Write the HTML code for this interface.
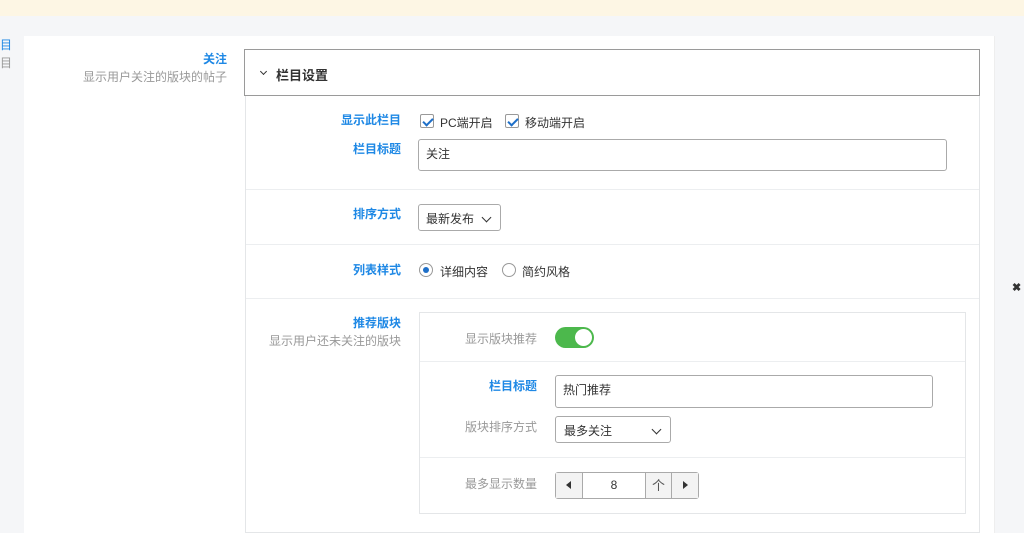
<!DOCTYPE html>
<html><head><meta charset="utf-8"><style>
*{box-sizing:border-box;margin:0;padding:0}
body{width:1024px;height:533px;overflow:hidden;background:#f5f6f8;font-family:"Liberation Sans","Noto Sans CJK SC",sans-serif;font-size:12px;color:#333;position:relative}
.a{position:absolute}
.blue{color:#1e88e5}
.gray{color:#999}
.lbl{position:absolute;text-align:right;font-weight:bold;color:#1e88e5}
.inp{position:absolute;border:1px solid #aaa;border-radius:3px;background:#fff;padding:5px 7px;font-size:12px}
.cb{position:absolute;width:14px;height:14px;border:1px solid #999;border-radius:2px;background:#fff}
.cb:after{content:"";position:absolute;left:4px;top:1px;width:4px;height:8px;border:solid #1e6fc8;border-width:0 2px 2px 0;transform:rotate(45deg)}
.hr{position:absolute;height:1px;background:#eceef0}
.sel:after{content:"";position:absolute;right:10px;top:9px;width:6px;height:6px;border:solid #333;border-width:0 1.5px 1.5px 0;transform:rotate(45deg)}
</style></head><body>
<div class="a" style="left:0;top:0;width:1024px;height:16px;background:#fdf6e4"></div>
<div class="a blue" style="left:0;top:36px;font-size:12px">目</div>
<div class="a gray" style="left:0;top:54px;font-size:12px">目</div>
<div class="a" style="left:24px;top:36px;width:970px;height:497px;background:#fff"></div>
<div class="a" style="left:994px;top:36px;width:1px;height:497px;background:#eee"></div>
<div class="a" style="left:1012px;top:283px;width:10px;height:10px;font-size:11px;line-height:10px;color:#333;font-weight:bold">✖</div>
<div class="lbl" style="left:100px;width:127px;top:50px">关注</div>
<div class="a gray" style="left:60px;width:167px;text-align:right;top:68px">显示用户关注的版块的帖子</div>
<div class="a" style="left:245px;top:96px;width:735px;height:437px;border:1px solid #e4e6e8;border-top:none"></div>
<div class="a" style="left:244px;top:49px;width:736px;height:47px;border:1px solid #9a9a9a;background:#fff"></div>
<div class="a" style="left:261px;top:69px;width:5px;height:5px;border:solid #333;border-width:0 1.5px 1.5px 0;transform:rotate(45deg)"></div>
<div class="a" style="left:276px;top:65px;font-size:13px;font-weight:bold">栏目设置</div>
<div class="lbl" style="left:300px;width:101px;top:111px">显示此栏目</div>
<div class="cb" style="left:420px;top:114px"></div><div class="a" style="left:440px;top:114px">PC端开启</div>
<div class="cb" style="left:505px;top:114px"></div><div class="a" style="left:525px;top:114px">移动端开启</div>
<div class="lbl" style="left:300px;width:101px;top:140px">栏目标题</div>
<div class="inp" style="left:418px;top:139px;width:529px;height:32px">关注</div>
<div class="hr" style="left:246px;top:189px;width:733px"></div>
<div class="lbl" style="left:300px;width:101px;top:205px">排序方式</div>
<div class="inp sel" style="left:418px;top:204px;width:83px;height:27px">最新发布</div>
<div class="hr" style="left:246px;top:244px;width:733px"></div>
<div class="lbl" style="left:300px;width:101px;top:261px">列表样式</div>
<div class="a" style="left:419px;top:263px;width:14px;height:14px;border:1px solid #999;border-radius:50%"><div class="a" style="left:3px;top:3px;width:6px;height:6px;border-radius:50%;background:#1e6fc8"></div></div>
<div class="a" style="left:440px;top:263px">详细内容</div>
<div class="a" style="left:502px;top:263px;width:14px;height:14px;border:1px solid #999;border-radius:50%"></div>
<div class="a" style="left:522px;top:263px">简约风格</div>
<div class="hr" style="left:246px;top:298px;width:733px"></div>
<div class="lbl" style="left:300px;width:101px;top:314px">推荐版块</div>
<div class="a gray" style="left:240px;width:161px;text-align:right;top:332px">显示用户还未关注的版块</div>
<div class="a" style="left:419px;top:312px;width:547px;height:202px;border:1px solid #e4e6e8"></div>
<div class="a gray" style="left:420px;width:117px;text-align:right;top:330px">显示版块推荐</div>
<div class="a" style="left:555px;top:327px;width:39px;height:21px;border-radius:11px;background:#4cb84c"><div class="a" style="left:20px;top:2px;width:17px;height:17px;border-radius:50%;background:#fff"></div></div>
<div class="hr" style="left:420px;top:361px;width:545px"></div>
<div class="lbl" style="left:420px;width:117px;top:377px">栏目标题</div>
<div class="inp" style="left:555px;top:375px;width:378px;height:33px">热门推荐</div>
<div class="a gray" style="left:420px;width:117px;text-align:right;top:418px">版块排序方式</div>
<div class="inp sel" style="left:555px;top:416px;width:116px;height:27px;padding-left:8px">最多关注</div>
<div class="hr" style="left:420px;top:457px;width:545px"></div>
<div class="a gray" style="left:420px;width:117px;text-align:right;top:475px">最多显示数量</div>
<div class="a" style="left:555px;top:472px;width:144px;height:27px;border:1px solid #aaa;border-radius:3px;background:#fff">
<div class="a" style="left:0;top:0;width:27px;height:25px;background:#f3f3f3;border-right:1px solid #aaa"></div>
<div class="a" style="left:10px;top:8px;width:0;height:0;border-top:4.5px solid transparent;border-bottom:4.5px solid transparent;border-right:5px solid #333"></div>
<div class="a" style="left:27px;width:62px;top:5px;text-align:center">8</div>
<div class="a" style="left:89px;top:0;width:27px;height:25px;background:#f3f3f3;border-left:1px solid #aaa;border-right:1px solid #aaa;text-align:center;line-height:25px;color:#555;font-size:13px">个</div>
<div class="a" style="left:116px;top:0;width:26px;height:25px;background:#f3f3f3"></div>
<div class="a" style="left:127px;top:8px;width:0;height:0;border-top:4.5px solid transparent;border-bottom:4.5px solid transparent;border-left:5px solid #333"></div>
</div>
</body></html>
